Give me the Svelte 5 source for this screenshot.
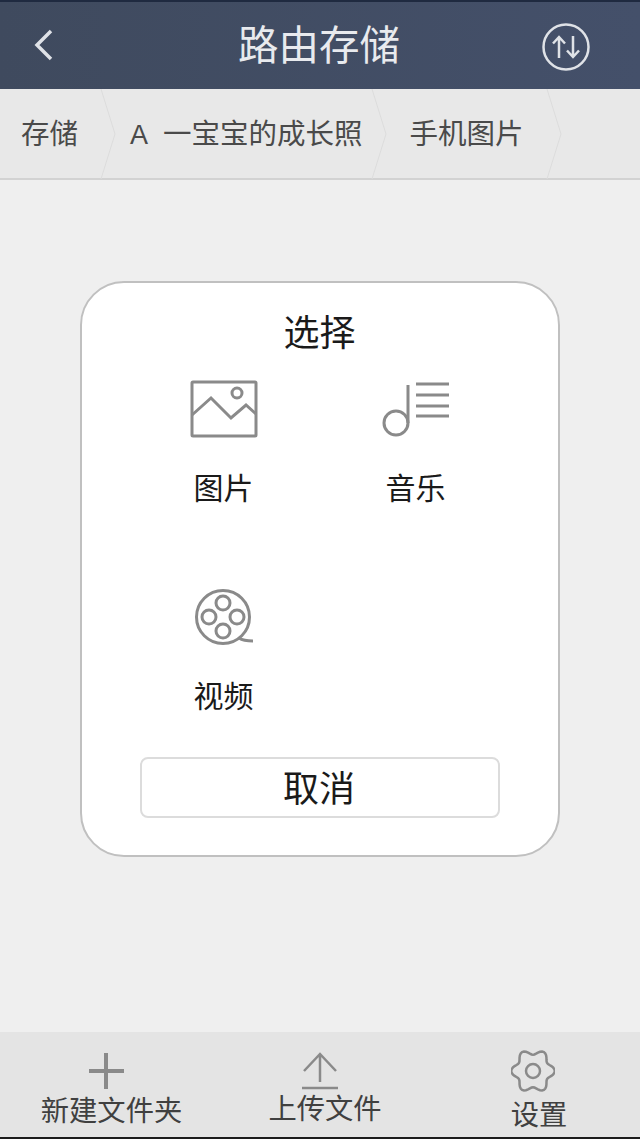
<script>
	// wavy six-lobed outline for the settings gear
	const gearPoints = [];
	for (let i = 0; i < 72; i++) {
		const a = (i / 72) * Math.PI * 2;
		const r = 19 + 2.8 * Math.cos(6 * a);
		gearPoints.push(`${(22 + r * Math.cos(a)).toFixed(2)},${(22 + r * Math.sin(a)).toFixed(2)}`);
	}
	const gearPath = `M${gearPoints.join('L')}Z`;
</script>

<div class="page">
	<header class="header">
		<svg class="back" width="20" height="32" viewBox="0 0 20 32">
			<path d="M17 2 3 16 17 30" />
		</svg>
		<h1>路由存储</h1>
		<svg class="transfer" width="50" height="50" viewBox="0 0 50 50">
			<circle cx="25" cy="25" r="22.500" />
			<path d="M18 36V15M12 21.500 18 15l6 6.500M32 14v21M26 28.500l6 6.500 6-6.500" />
		</svg>
	</header>

	<nav class="crumbs">
		<span class="crumb first">存储</span>
		<svg class="sep" width="16" height="90" viewBox="0 0 16 90"><path d="M1 0 15 45 1 90" /></svg>
		<span class="crumb second"><span class="letter">A</span>一宝宝的成长照</span>
		<svg class="sep" width="16" height="90" viewBox="0 0 16 90"><path d="M1 0 15 45 1 90" /></svg>
		<span class="crumb third">手机图片</span>
		<svg class="sep" width="16" height="90" viewBox="0 0 16 90"><path d="M1 0 15 45 1 90" /></svg>
	</nav>

	<main class="content">
		<section class="dialog">
			<h2>选择</h2>
			<div class="options">
				<div class="option">
					<svg width="68" height="58" viewBox="0 0 68 58">
						<rect x="2" y="2" width="64" height="54" rx="1" />
						<path d="M2 35 21 18l20 20 15-13 10 9" />
						<circle cx="47" cy="13" r="5" />
					</svg>
					<span>图片</span>
				</div>
				<div class="option">
					<svg width="68" height="58" viewBox="0 0 68 58">
						<circle cx="14" cy="43" r="12" />
						<path d="M26 43V5M34 4h33M34 15h33M34 26h33M34 36h33" />
					</svg>
					<span>音乐</span>
				</div>
				<div class="option">
					<svg width="68" height="58" viewBox="0 0 68 58">
						<circle cx="33" cy="29" r="26.500" />
						<circle cx="33" cy="15" r="7" />
						<circle cx="33" cy="43" r="7" />
						<circle cx="19" cy="29" r="7" />
						<circle cx="47" cy="29" r="7" />
						<path d="M49 50c3 2 8 3 14 3" />
					</svg>
					<span>视频</span>
				</div>
			</div>
			<button class="cancel">取消</button>
		</section>
	</main>

	<footer class="toolbar">
		<div class="tool new-folder">
			<svg width="36" height="38" viewBox="0 0 36 38"><path class="thick" d="M18 1v36M1 19h35" /></svg>
			<span>新建文件夹</span>
		</div>
		<div class="tool upload">
			<svg width="38" height="38" viewBox="0 0 38 38">
				<path class="fine" d="M19 30V2M3 19 19 2l16 17" />
				<path class="fine" d="M1 36h36" />
			</svg>
			<span>上传文件</span>
		</div>
		<div class="tool settings">
			<svg width="44" height="44" viewBox="0 0 44 44">
				<path d={gearPath} />
				<circle cx="22" cy="22" r="7" />
			</svg>
			<span>设置</span>
		</div>
	</footer>
</div>

<style>
	:global(body) {
		background: #efefef;
	}

	.page {
		display: flex;
		flex-direction: column;
		height: 1139px;
		overflow: hidden;
		font-family: 'Noto Sans CJK SC', 'Noto Sans', sans-serif;
		background: #efefef;
	}

	svg {
		fill: none;
		stroke: #8a8a8a;
		stroke-width: 3;
		flex: none;
	}

	.header {
		display: flex;
		align-items: center;
		justify-content: center;
		position: relative;
		box-sizing: border-box;
		height: 89px;
		border-top: 2px solid #1f2a40;
		background: linear-gradient(90deg, #3f4a5e, #44506a);
		color: #e8eaee;
	}
	.header h1 {
		margin: -5px 0 0 -2px;
		font-size: 40.500px;
		font-weight: 400;
		line-height: 1;
	}
	.back,
	.transfer {
		position: absolute;
		stroke: #dfe2e7;
	}
	.back {
		left: 34px;
		top: 27px;
		stroke-width: 3.500;
	}
	.transfer {
		left: 541px;
		top: 20px;
		stroke-width: 2.500;
	}

	.crumbs {
		display: flex;
		align-items: center;
		box-sizing: border-box;
		height: 91px;
		padding-left: 21px;
		background: #e8e8e8;
		border-bottom: 2px solid #d2d2d2;
		font-size: 28.500px;
		color: #4a4a4a;
	}
	.crumbs .sep {
		stroke: #dcdcdc;
		stroke-width: 1;
	}
	.crumb {
		white-space: nowrap;
		margin-top: -4px;
	}
	.first {
		margin-right: 22px;
	}
	.second {
		margin-right: 8px;
		margin-left: 14px;
	}
	.letter {
		display: inline-block;
		width: 33px;
		font-family: 'Liberation Sans', sans-serif;
		font-size: 27px;
	}
	.third {
		margin-right: 22px;
		margin-left: 23px;
	}

	.content {
		flex: 1;
		padding: 101px 80px 0;
	}

	.dialog {
		box-sizing: border-box;
		width: 480px;
		height: 576px;
		padding-top: 23px;
		background: #fff;
		border: 2px solid #c0c0c0;
		border-radius: 44px;
		display: flex;
		flex-direction: column;
		align-items: center;
		color: #1a1a1a;
	}
	.dialog h2 {
		margin: 0 1px 0 0;
		font-size: 36px;
		font-weight: 400;
		line-height: 48px;
	}
	.options {
		align-self: flex-start;
		display: grid;
		grid-template-columns: 192px 192px;
		grid-auto-rows: 208px;
		margin-left: 46px;
		margin-top: 1px;
		height: 379px;
	}
	.option {
		display: flex;
		flex-direction: column;
		align-items: center;
		gap: 30px;
		padding-top: 25px;
		font-size: 30px;
		line-height: 36px;
	}
	.option span {
		margin-left: -1px;
	}
	.cancel {
		box-sizing: border-box;
		width: 360px;
		height: 61px;
		margin-top: 23px;
		padding: 0 2px 3px 0;
		background: #fff;
		border: 2px solid #dcdcdc;
		border-radius: 8px;
		font: inherit;
		font-size: 36px;
		color: #1a1a1a;
	}

	.toolbar {
		box-sizing: border-box;
		height: 107px;
		background: #e4e4e4;
		border-bottom: 2px solid #1c1c1c;
		font-size: 28.300px;
		color: #404040;
		display: flex;
	}
	.tool {
		display: flex;
		flex-direction: column;
		align-items: center;
		white-space: nowrap;
		line-height: 36px;
	}
	.new-folder {
		width: 141px;
		margin-left: 41px;
		padding-top: 20px;
		gap: 1px;
	}
	.new-folder svg {
		margin-left: -11px;
	}
	.upload {
		width: 112px;
		margin-left: 87px;
		padding-top: 20px;
		gap: 0;
	}
	.upload span {
		margin-top: -1px;
	}
	.upload svg {
		margin-left: -10px;
	}
	.settings {
		width: 56px;
		margin-left: 130px;
		padding-top: 17px;
		gap: 2px;
	}
	.settings svg {
		margin-left: -12px;
		stroke-width: 2.500;
	}
	.thick {
		stroke-width: 4;
	}
	.fine {
		stroke-width: 2.500;
	}
</style>
